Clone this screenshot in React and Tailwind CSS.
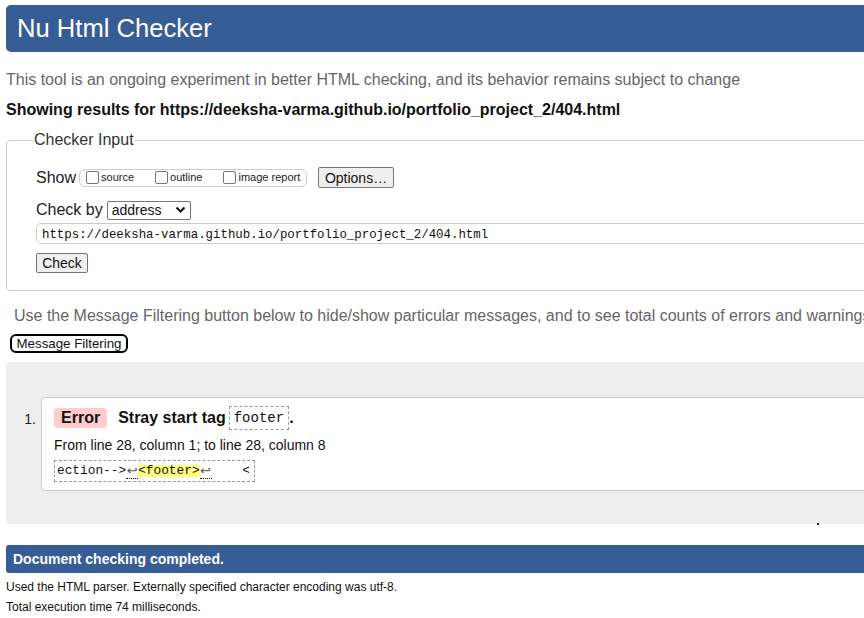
import React from 'react'

const blue = 'bg-[#365d95]'

function Checkbox({ label, last }) {
  return (
    <label className={`flex items-center ${last ? '' : 'mr-[21px]'}`}>
      <span className="w-[13px] h-[13px] border border-[#767676] rounded-[2px] bg-white mr-[2px]" />
      <span className="text-[11px] leading-none text-[#222]">{label}</span>
    </label>
  )
}

export default function App() {
  return (
    <div className="w-[864px] h-[618px] overflow-hidden bg-white text-[#000] font-['Liberation_Sans',Arial,sans-serif]">
      <div className="w-[1000px] pl-[6px] relative">

        {/* Title bar */}
        <div className={`mt-[5px] h-[47px] ${blue} rounded-l-[5px] flex items-center pl-[11px]`}>
          <h1 className="text-[25.6px] leading-none text-white">Nu Html Checker</h1>
        </div>

        <p className="mt-[19px] text-[16px] leading-[18px] text-[#666]">
          This tool is an ongoing experiment in better HTML checking, and its behavior remains subject to change
        </p>
        <p className="mt-[12px] text-[16px] leading-[18px] font-bold text-[#111]">
          Showing results for https://deeksha-varma.github.io/portfolio_project_2/404.html
        </p>

        {/* Checker input */}
        <fieldset className="mt-[12px] border border-[#ccc] rounded-[4px] pl-[29px] pb-[17px]">
          <legend className="-ml-[3px] px-[1px] text-[16px] leading-[18px] text-[#333]">Checker Input</legend>

          <div className="mt-[18px] flex items-center h-[21px]">
            <span className="text-[16px] leading-none text-[#222] mr-[3px]">Show</span>
            <div className="h-[18px] w-[228px] border border-[#ccc] rounded-[6px] flex items-center pl-[6px]">
              <Checkbox label="source" />
              <Checkbox label="outline" />
              <Checkbox label="image report" last />
            </div>
            <button className="ml-[11px] h-[21px] w-[76px] bg-[#efefef] border border-[#767676] rounded-[2px] text-[14px] leading-none text-[#111]">
              Options…
            </button>
          </div>

          <div className="mt-[13px] flex items-center h-[18px]">
            <span className="text-[16px] leading-none text-[#222] mr-[4px]">Check by</span>
            <div className="h-[19px] w-[84px] border border-[#767676] rounded-[2px] flex items-center justify-between px-[4px]">
              <span className="text-[14px] leading-none text-[#111]">address</span>
              <svg width="11" height="8" viewBox="0 0 11 8" fill="none" stroke="#111" strokeWidth="2">
                <path d="M1.5 1.5 L5.5 5.5 L9.5 1.5" />
              </svg>
            </div>
          </div>

          <div className="mt-[4px] h-[21px] border border-[#ccc] rounded-l-[5px] flex items-center pl-[5px] pt-[3px]">
            <span className="text-[12.4px] leading-none text-[#111] font-['Liberation_Mono',monospace]">
              https://deeksha-varma.github.io/portfolio_project_2/404.html
            </span>
          </div>

          <button className="mt-[9px] h-[20px] w-[52px] bg-[#efefef] border border-[#767676] rounded-[2px] text-[14px] leading-none text-[#111] block">
            Check
          </button>
        </fieldset>

        <p className="mt-[16px] pl-[8px] text-[16px] leading-[18px] text-[#666] whitespace-nowrap">
          Use the Message Filtering button below to hide/show particular messages, and to see total counts of errors and warnings.
        </p>
        <button className="mt-[9px] ml-[4px] h-[19px] w-[118px] border-2 border-black rounded-[6px] bg-white text-[13.3px] leading-none text-[#111] block">
          Message Filtering
        </button>

        {/* Results */}
        <div className="mt-[9px] h-[162px] bg-[#eee] rounded-l-[4px] pt-[35px] relative">
          <ol className="flex">
            <li className="flex w-full">
              <span className="w-[35px] text-right pr-[5px] pt-[14px] text-[14px] leading-[16px] text-[#222]">1.</span>
              <div className="flex-1 h-[94px] bg-white border border-[#ccc] rounded-l-[4px] pl-[12px] pt-[8px]">
                <div className="flex items-center h-[24px]">
                  <span className="h-[20px] px-[7px] bg-[#fcc] rounded-[4px] text-[16px] leading-[20px] font-bold text-[#111]">Error</span>
                  <span className="ml-[11px] text-[16px] leading-none font-bold text-[#111]">Stray start tag</span>
                  <code className="ml-[3px] h-[24px] px-[4px] border border-dashed border-[#999] text-[14px] leading-[22px] text-[#111] font-['Liberation_Mono',monospace]">footer</code>
                  <span className="text-[16px] font-bold leading-none">.</span>
                </div>
                <p className="mt-[7px] text-[14px] leading-[16px] text-[#111]">From line 28, column 1; to line 28, column 8</p>
                <div className="mt-[7px] w-[201px] h-[22px] border border-dashed border-[#999] flex items-center pl-[2px] text-[12.8px] leading-none text-[#111] font-['Liberation_Mono',monospace] whitespace-pre">
                  <span>ection--&gt;</span>
                  <span className="inline-block w-[12px] h-[15px] text-center text-[13px] leading-[13px] text-[#555] font-['DejaVu_Sans',sans-serif] border-b border-dotted border-[#111]">↩</span>
                  <span className="bg-[#ffff80]">&lt;footer&gt;</span>
                  <span className="inline-block w-[12px] h-[15px] text-center text-[13px] leading-[13px] text-[#555] font-['DejaVu_Sans',sans-serif] border-b border-dotted border-[#111]">↩</span>
                  <span>{'    <'}</span>
                </div>
              </div>
            </li>
          </ol>
          <span className="absolute left-[811px] bottom-[-1px] w-[2px] h-[2px] bg-[#00f]" />
        </div>

        {/* Footer */}
        <div className={`mt-[21px] h-[28px] ${blue} rounded-l-[3px] flex items-center pl-[7px]`}>
          <span className="text-[14px] leading-none font-bold text-white">Document checking completed.</span>
        </div>
        <p className="mt-[7px] text-[12px] leading-[14px] text-[#111]">Used the HTML parser. Externally specified character encoding was utf-8.</p>
        <p className="mt-[6px] text-[12px] leading-[14px] text-[#111]">Total execution time 74 milliseconds.</p>
      </div>
    </div>
  )
}
